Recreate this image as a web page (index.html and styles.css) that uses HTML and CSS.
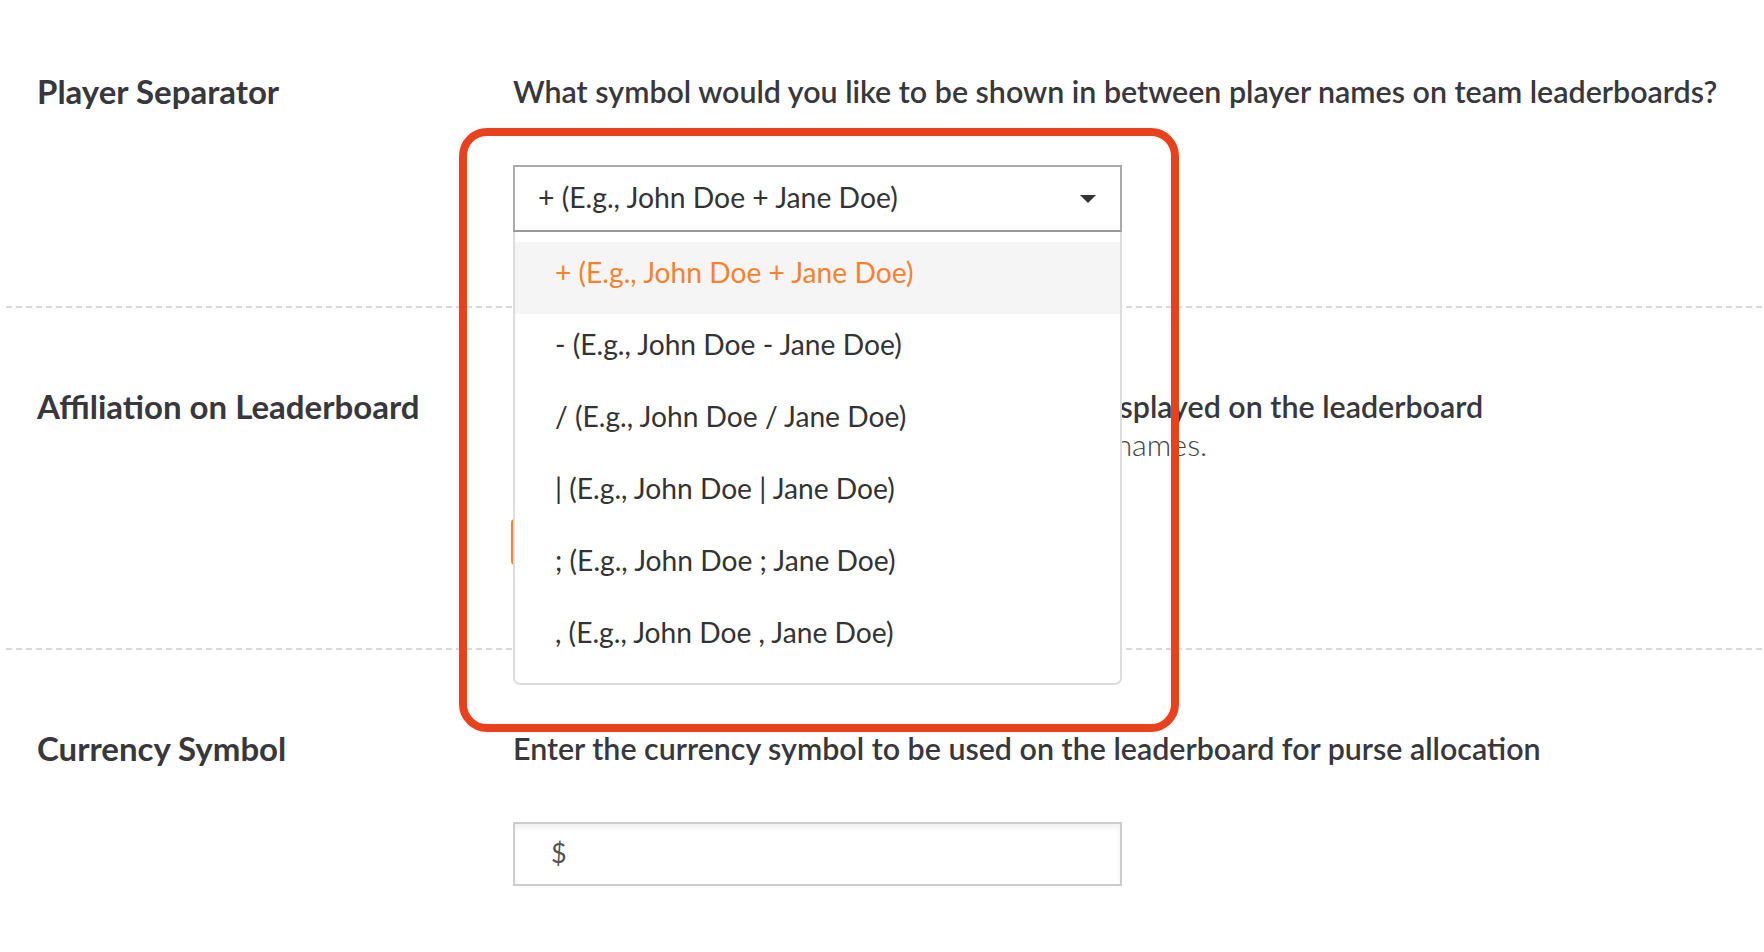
FILE: index.html
```html
<!DOCTYPE html>
<html lang="en">

<head>
    <meta charset="UTF-8">
    <meta name="viewport" content="width=device-width, initial-scale=1.0">
    <title>Leaderboard Settings</title>
    <link rel="stylesheet" href="styles.css">
</head>

<body>
    <div class="settings">
        <section class="setting setting-first">
            <h3 class="setting-label">Player Separator</h3>
            <div class="setting-body">
                <p class="setting-desc">What symbol would you like to be shown in between player names on team leaderboards?</p>
                <div class="select-wrap">
                    <div class="select">
                        <span>+ (E.g., John Doe + Jane Doe)</span>
                        <span class="caret"></span>
                    </div>
                    <ul class="select-menu">
                        <li class="active">+ (E.g., John Doe + Jane Doe)</li>
                        <li>- (E.g., John Doe - Jane Doe)</li>
                        <li>/ (E.g., John Doe / Jane Doe)</li>
                        <li>| (E.g., John Doe | Jane Doe)</li>
                        <li>; (E.g., John Doe ; Jane Doe)</li>
                        <li>, (E.g., John Doe , Jane Doe)</li>
                    </ul>
                    <!-- highlight box drawn round the open dropdown -->
                    <div class="callout"></div>
                </div>
            </div>
        </section>

        <div class="divider"></div>

        <section class="setting setting-mid">
            <h3 class="setting-label">Affiliation on Leaderboard</h3>
            <div class="setting-body">
                <p class="setting-desc setting-desc-two">
                    Would you like each team's affiliation to be displayed on the leaderboard
                    <span class="setting-note">It will then be displayed just beside the player names.</span>
                </p>
                <div class="toggle">
                    <span class="toggle-btn on">Yes</span>
                    <span class="toggle-btn">No</span>
                </div>
            </div>
        </section>

        <div class="divider"></div>

        <section class="setting">
            <h3 class="setting-label">Currency Symbol</h3>
            <div class="setting-body">
                <p class="setting-desc">Enter the currency symbol to be used on the leaderboard for purse allocation</p>
                <input class="text-input" type="text" value="$">
            </div>
        </section>
    </div>
</body>

</html>
```

FILE: styles.css
```css
body {
    font-family: "Lato", "Liberation Sans", sans-serif;
    background-color: #fff;
    color: #333;
    margin: 0;
    padding: 0;
}

.settings {
    padding-left: 6px;
}

.setting {
    display: flex;
    padding: 79px 0 87px 31px;
}

.setting-first {
    padding-top: 72px;
    padding-bottom: 74px;
}

.setting-mid {
    padding-bottom: 83px;
}

.setting-label {
    flex: 0 0 476px;
    margin: 0;
    font-size: 33px;
    line-height: 38px;
    font-weight: 700;
    color: #38373b;
}

.setting-body {
    flex: 1;
}

.setting-desc {
    margin: 0 0 55px 0;
    font-size: 30.4px;
    line-height: 38px;
    font-weight: 600;
    color: #38373b;
}

.setting-desc-two {
    line-height: 42px;
    margin-top: -2px;
    margin-bottom: 56px;
}

.setting-note {
    display: block;
    margin-top: -2px;
    line-height: 38px;
    font-weight: 300;
    color: #444;
}

.divider {
    height: 2px;
    background: repeating-linear-gradient(90deg, #d9d9d9 0 6px, transparent 6px 10px);
}

/* dropdown */
.select-wrap {
    position: relative;
    width: 609px;
}

.select {
    height: 67px;
    box-sizing: border-box;
    border: 2px solid #aaa;
    border-bottom-color: #999;
    display: flex;
    align-items: center;
    justify-content: space-between;
    padding: 0 24px 4px 23px;
    font-size: 28.3px;
}

.caret {
    width: 0;
    height: 0;
    margin-top: 4px;
    border-left: 8px solid transparent;
    border-right: 8px solid transparent;
    border-top: 8px solid #333;
}

.select-menu {
    position: absolute;
    top: 67px;
    left: 0;
    right: 0;
    z-index: 2;
    margin: 0;
    padding: 10px 0 9px 0;
    list-style: none;
    background: #fff;
    border: 2px solid #ddd;
    border-top: none;
    border-radius: 0 0 7px 7px;
}

.select-menu li {
    height: 72px;
    line-height: 60px;
    padding-left: 40px;
    font-size: 28.2px;
    color: #333;
}

.select-menu li.active {
    background: #f5f5f5;
    color: #f7812e;
}

.callout {
    position: absolute;
    top: -37px;
    left: -54px;
    width: 720px;
    height: 604px;
    box-sizing: border-box;
    border: 8px solid #e8411b;
    border-radius: 28px;
    z-index: 3;
}

/* yes / no toggle */
.toggle {
    display: flex;
    margin-left: -2px;
}

.toggle-btn {
    height: 42px;
    line-height: 42px;
    padding: 0 30px;
    border: 2px solid #f7812e;
    color: #f7812e;
    font-size: 24px;
}

.toggle-btn.on {
    background: #f07a22;
    color: #fff;
    border-radius: 4px 0 0 4px;
}

/* text input */
.text-input {
    display: block;
    width: 609px;
    height: 64px;
    box-sizing: border-box;
    border: 2px solid #ccc;
    box-shadow: inset 0 4px 5px rgba(0, 0, 0, 0.06);
    padding: 0 36px 4px 36px;
    font-family: "Lato", "Liberation Sans", sans-serif;
    font-size: 27px;
    color: #555;
    outline: none;
}
```
